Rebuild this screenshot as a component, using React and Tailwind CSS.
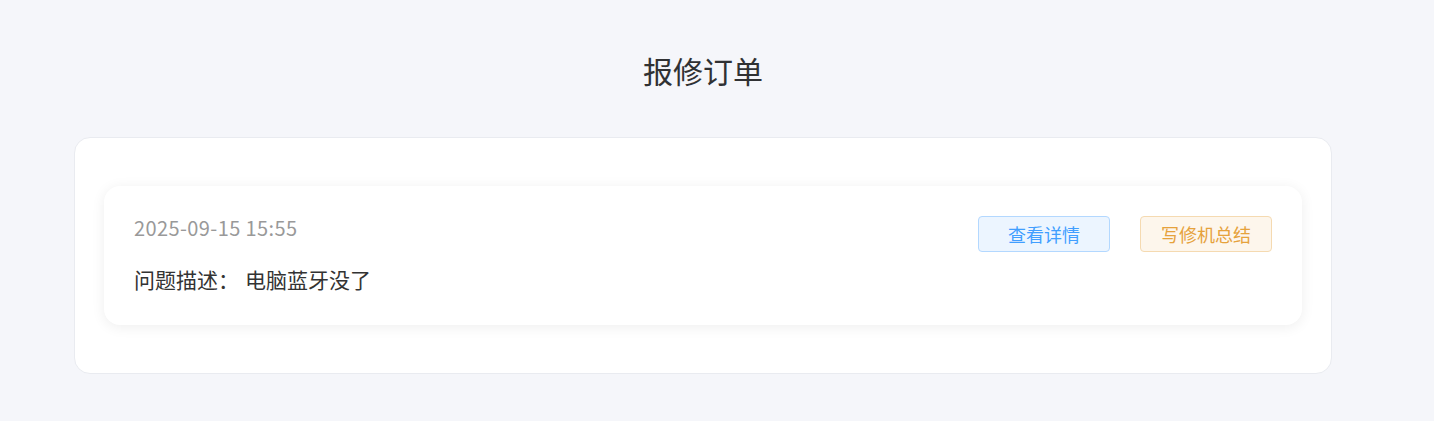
export default function App() {
  const font = { fontFamily: '"Noto Sans CJK SC", "Noto Sans", sans-serif' };
  return (
    <div className="min-h-[421px] w-full bg-[#f5f6fa]" style={font}>
      <div className="w-[1406px] pt-[50px]">
        <h1 className="text-center text-[30px] leading-[40px] text-[#303133] font-normal">报修订单</h1>
        <div className="mx-[74px] mt-[47px] rounded-[16px] border border-[#e9ebf0] bg-white px-[29px] py-[48px]">
          <div className="flex justify-between rounded-[16px] bg-white pl-[30px] pr-[30px] pt-[30px] pb-[32px] shadow-[0_2px_14px_rgba(0,0,0,0.07)]">
            <div className="flex flex-col">
              <div className="text-[20px] leading-[24px] tracking-[0.4px] text-[#999999]">2025-09-15 15:55</div>
              <div className="mt-[25px] text-[21px] leading-[28px] text-[#333333]">
                问题描述：<span className="ml-[6px]">电脑蓝牙没了</span>
              </div>
            </div>
            <div className="flex items-start gap-[30px]">
              <button className="flex h-[36px] w-[132px] items-center justify-center rounded-[4px] border border-[#b3d8ff] bg-[#ecf5ff] text-[18px] text-[#409eff]">
                查看详情
              </button>
              <button className="flex h-[36px] w-[132px] items-center justify-center rounded-[4px] border border-[#f5dab1] bg-[#fdf6ec] text-[18px] text-[#e6a23c]">
                写修机总结
              </button>
            </div>
          </div>
        </div>
      </div>
    </div>
  );
}
